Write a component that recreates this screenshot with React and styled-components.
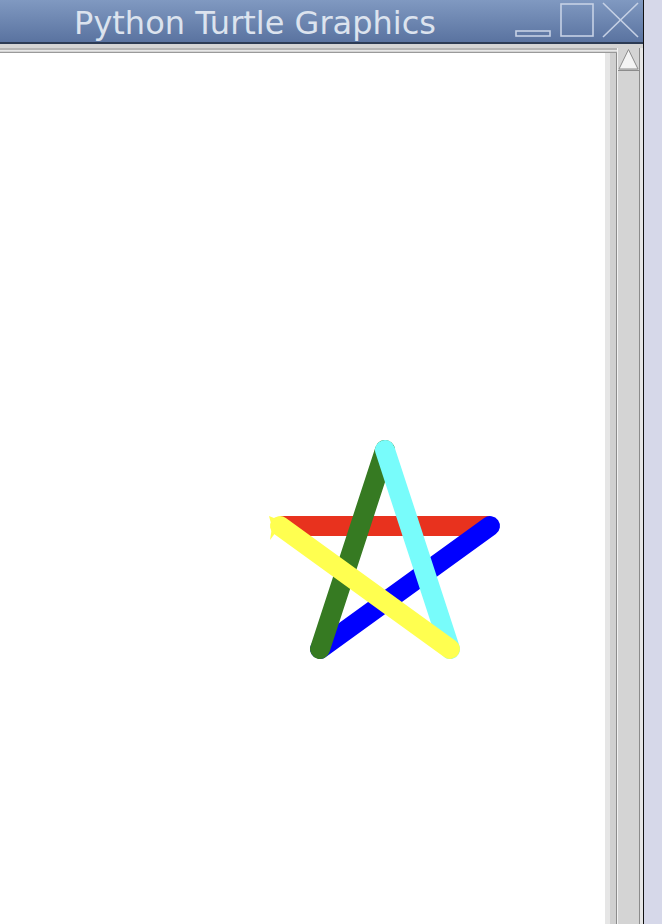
import React from 'react'
import styled, { createGlobalStyle } from 'styled-components'

const GlobalStyle = createGlobalStyle`
  html, body {
    margin: 0;
    padding: 0;
    background: #d6d8e9;
    overflow: hidden;
  }
`

const Desktop = styled.div`
  width: 662px;
  height: 924px;
  background: #d6d8e9;
  display: flex;
`

const Window = styled.div`
  width: 643px;
  height: 924px;
  display: flex;
  flex-direction: column;
  border-right: 1px solid #111;
  background: #d4d4d4;
`

const TitleBar = styled.div`
  height: 42px;
  flex-shrink: 0;
  display: flex;
  align-items: center;
  background: linear-gradient(#8099c1, #5a73a0);
  border-bottom: 2px solid #2c3b54;
`

const Title = styled.div`
  flex: 1;
  text-align: center;
  font-family: "DejaVu Sans", "Liberation Sans", sans-serif;
  font-size: 32px;
  color: #dce3ee;
  padding-top: 4px;
  white-space: nowrap;
`

const TitleButtons = styled.div`
  width: 133px;
  height: 42px;
  flex-shrink: 0;
  display: flex;
  align-items: center;
`

const Body = styled.div`
  flex: 1;
  display: flex;
  padding-top: 4px;
  min-height: 0;
`

const Well = styled.div`
  display: flex;
  flex-direction: column;
  border-top: 2px solid #b4b4b4;
  box-shadow: inset 0 1px 0 #e8e8e8;
`

const CanvasRow = styled.div`
  flex: 1;
  display: flex;
  margin-top: 2px;
  border-top: 1px solid #9a9a9a;
`

const Canvas = styled.div`
  width: 605px;
  background: #fff;
`

const Gutter = styled.div`
  width: 6px;
  background: #d0d0d0;
  border-left: 5px solid #e6e6e6;
  border-right: 1px solid #8c8c8c;
`

const Scrollbar = styled.div`
  width: 21px;
  background: #d4d4d4;
  border-left: 1px solid #f2f2f2;
  border-right: 1px solid #8c8c8c;
  display: flex;
  flex-direction: column;
`

const ArrowButton = styled.div`
  height: 22px;
  border-bottom: 1px solid #8c8c8c;
  display: flex;
  align-items: center;
  justify-content: center;
`

const Edge = styled.div`
  width: 3px;
  background: #e6e6e6;
`

const StarSvg = styled.svg`
  display: block;
`

// turtle path, in canvas coordinates (canvas starts at y=52)
const pts = [
  [280, 473],
  [490, 473],
  [320, 596],
  [385, 397],
  [450, 596],
  [280, 473],
]
const colors = ['#e8321e', '#0000ff', '#367a22', '#78fcfb', '#ffff50']

export default function App() {
  return (
    <>
      <GlobalStyle />
      <Desktop>
        <Window>
          <TitleBar>
            <Title>Python Turtle Graphics</Title>
            <TitleButtons>
              <svg width="133" height="42" viewBox="0 0 133 42">
                <g fill="none" stroke="#c6d1e5" strokeWidth="1.6">
                  <rect x="6" y="31" width="34" height="5" />
                  <rect x="51" y="4" width="32" height="32" />
                  <line x1="93" y1="3" x2="128" y2="37" />
                  <line x1="128" y1="3" x2="93" y2="37" />
                </g>
              </svg>
            </TitleButtons>
          </TitleBar>
          <Body>
            <Well>
              <CanvasRow>
                <Canvas>
                  <StarSvg width="605" height="872" viewBox="0 0 605 872">
                    {colors.map((c, i) => (
                      <line
                        key={i}
                        x1={pts[i][0]}
                        y1={pts[i][1]}
                        x2={pts[i + 1][0]}
                        y2={pts[i + 1][1]}
                        stroke={c}
                        strokeWidth="20"
                        strokeLinecap={i === 0 ? 'butt' : 'round'}
                      />
                    ))}
                    <polygon
                      points="269,463 284,469 290,483 276,479 270,487 272,474"
                      fill="#ffff50"
                    />
                  </StarSvg>
                </Canvas>
                <Gutter />
              </CanvasRow>
            </Well>
            <Scrollbar>
              <ArrowButton>
                <svg width="21" height="22" viewBox="0 0 21 22">
                  <polygon points="10.5,1.5 20,21 1,21" fill="#f4f4f4" stroke="#8c8c8c" strokeWidth="1" />
                </svg>
              </ArrowButton>
            </Scrollbar>
            <Edge />
          </Body>
        </Window>
      </Desktop>
    </>
  )
}
